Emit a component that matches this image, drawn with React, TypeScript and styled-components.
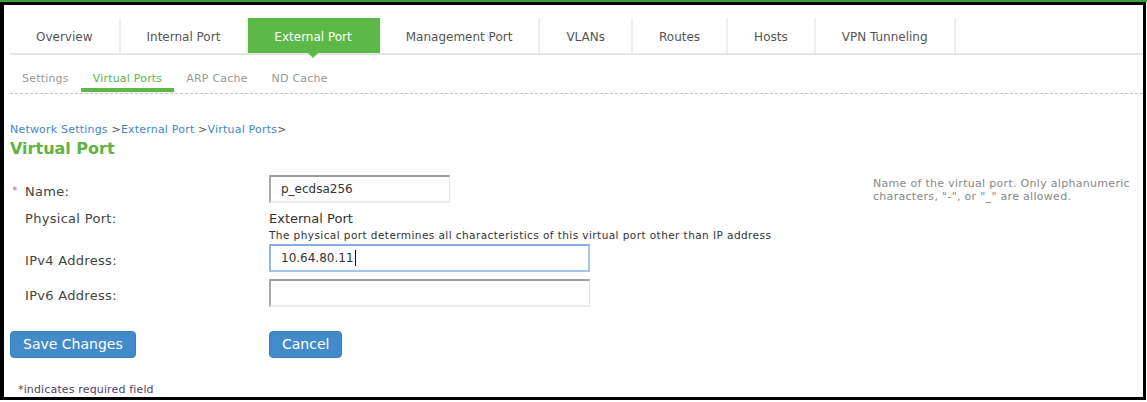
import React from "react";
import styled, { createGlobalStyle, css } from "styled-components";

const GlobalStyle = createGlobalStyle`
  html, body { margin: 0; padding: 0; background: #fff; }
  body { font-family: "DejaVu Sans", Verdana, sans-serif; }
  * { box-sizing: border-box; }
`;

const Page = styled.div`
  width: 1147px;
  height: 402px;
  border-top: 2px solid #3d9f3a;
  background: #fff;
`;

const Frame = styled.div`
  width: 1146px;
  height: 398px;
  border: 3px solid #000;
  border-left-width: 4px;
  padding-left: 6px;
  display: flex;
  flex-direction: column;
  overflow: hidden;
`;

const TabBar = styled.nav`
  margin-top: 13px;
  display: flex;
  border-bottom: 2px solid #e4e4e4;
`;

const Tab = styled.div<{ $active?: boolean }>`
  position: relative;
  height: 35px;
  padding: 3px 26px 0;
  line-height: 32px;
  font-size: 12px;
  white-space: nowrap;
  color: #555;
  border-right: 2px solid #eeeeee;
  ${(p) =>
    p.$active &&
    css`
      color: #fff;
      background: #5cb947;
      border-right-color: #5cb947;
      &::after {
        content: "";
        position: absolute;
        left: 50%;
        top: 100%;
        margin-left: -5px;
        border-left: 5px solid transparent;
        border-right: 5px solid transparent;
        border-top: 5px solid #5cb947;
        z-index: 1;
      }
    `}
`;

const SubNav = styled.nav`
  display: flex;
  padding-bottom: 1px;
  border-bottom: 1px dashed #c6c6c6;
`;

const SubTab = styled.div<{ $active?: boolean }>`
  height: 37px;
  padding: 15px 12px 0;
  line-height: 18px;
  font-size: 11px;
  letter-spacing: 0.2px;
  white-space: nowrap;
  color: ${(p) => (p.$active ? "#5cb947" : "#999")};
  border-bottom: 4px solid ${(p) => (p.$active ? "#5cb947" : "transparent")};
`;

const Breadcrumb = styled.div`
  margin-top: 29px;
  font-size: 11px;
  letter-spacing: 0.2px;
  line-height: 13px;
  color: #555;
`;

const Crumb = styled.a`
  color: #3f87cb;
  text-decoration: none;
`;

const Title = styled.h1`
  margin: 3px 0 0;
  font-size: 16px;
  line-height: 20px;
  font-weight: bold;
  color: #62b346;
`;

const Form = styled.form`
  margin: 16px 0 0;
  display: flex;
  flex-direction: column;
`;

const Row = styled.div<{ $gap?: number }>`
  display: grid;
  grid-template-columns: 259px 604px 1fr;
  align-items: start;
  margin-top: ${(p) => p.$gap ?? 0}px;
`;

const Label = styled.label<{ $static?: boolean }>`
  height: ${(p) => (p.$static ? "16px" : "28px")};
  padding: ${(p) => (p.$static ? "0" : "3px")} 0 0 15px;
  font-size: 13px;
  letter-spacing: 0.3px;
  line-height: ${(p) => (p.$static ? "16px" : "28px")};
  color: #444;
  white-space: nowrap;
`;

const Star = styled.span`
  display: inline-block;
  width: 14px;
  margin-left: -14px;
  padding-left: 1px;
  font-size: 11px;
  color: #7d8fae;
  vertical-align: top;
  line-height: 26px;
`;

const TextBox = styled.div<{ $width: number; $focused?: boolean }>`
  width: ${(p) => p.$width}px;
  height: 28px;
  padding: 0 10px;
  font-size: 12px;
  line-height: 24px;
  color: #333;
  background: #fff;
  border-style: solid;
  border-width: 2px 1px 2px 2px;
  border-color: #9d9d9d #e3e3e3 #ebebeb #a9a9a9;
  white-space: nowrap;
  ${(p) =>
    p.$focused &&
    css`
      border-width: 2px;
      border-color: #86ade0 #a6c4ea #a6c4ea #94b8e5;
    `}
`;

const Caret = styled.span`
  display: inline-block;
  width: 1px;
  height: 16px;
  margin-left: 1px;
  background: #111;
  vertical-align: -4px;
`;

const StaticValue = styled.div`
  font-size: 13px;
  line-height: 16px;
  color: #333;
`;

const Note = styled.div`
  margin-top: 2px;
  font-size: 10.5px;
  letter-spacing: 0.43px;
  line-height: 12px;
  color: #333;
  white-space: nowrap;
`;

const Help = styled.div`
  padding-top: 2px;
  font-size: 11px;
  letter-spacing: 0.3px;
  line-height: 13px;
  color: #888;
  white-space: nowrap;
`;

const Button = styled.button`
  justify-self: start;
  height: 27px;
  padding: 0 12px;
  font-family: inherit;
  font-size: 14px;
  line-height: 25px;
  color: #fff;
  background: #428bca;
  border: 1px solid #3b80bf;
  border-radius: 4px;
  cursor: pointer;
`;

const Footnote = styled.div`
  margin-top: 25px;
  padding-left: 8px;
  font-size: 11px;
  letter-spacing: 0.15px;
  line-height: 13px;
  color: #553f66;
`;

const tabs = [
  "Overview",
  "Internal Port",
  "External Port",
  "Management Port",
  "VLANs",
  "Routes",
  "Hosts",
  "VPN Tunneling",
];

const subTabs = ["Settings", "Virtual Ports", "ARP Cache", "ND Cache"];

export default function App() {
  return (
    <>
      <GlobalStyle />
      <Page>
        <Frame>
          <TabBar>
            {tabs.map((t) => (
              <Tab key={t} $active={t === "External Port"}>
                {t}
              </Tab>
            ))}
          </TabBar>
          <SubNav>
            {subTabs.map((t) => (
              <SubTab key={t} $active={t === "Virtual Ports"}>
                {t}
              </SubTab>
            ))}
          </SubNav>
          <Breadcrumb>
            <Crumb>Network Settings</Crumb> &gt;<Crumb>External Port</Crumb> &gt;
            <Crumb>Virtual Ports</Crumb>&gt;
          </Breadcrumb>
          <Title>Virtual Port</Title>
          <Form onSubmit={(e) => e.preventDefault()}>
            <Row>
              <Label>
                <Star>*</Star>Name:
              </Label>
              <div>
                <TextBox $width={181}>p_ecdsa256</TextBox>
              </div>
              <Help>
                Name of the virtual port. Only alphanumeric
                <br />
                characters, "-", or "_" are allowed.
              </Help>
            </Row>
            <Row $gap={8}>
              <Label $static>Physical Port:</Label>
              <div>
                <StaticValue>External Port</StaticValue>
                <Note>
                  The physical port determines all characteristics of this virtual port other than IP
                  address
                </Note>
              </div>
            </Row>
            <Row $gap={3}>
              <Label>IPv4 Address:</Label>
              <div>
                <TextBox $width={321} $focused>
                  10.64.80.11
                  <Caret />
                </TextBox>
              </div>
            </Row>
            <Row $gap={7}>
              <Label>IPv6 Address:</Label>
              <div>
                <TextBox $width={321} />
              </div>
            </Row>
            <Row $gap={24}>
              <Button type="submit">Save Changes</Button>
              <Button type="button">Cancel</Button>
            </Row>
          </Form>
          <Footnote>*indicates required field</Footnote>
        </Frame>
      </Page>
    </>
  );
}
